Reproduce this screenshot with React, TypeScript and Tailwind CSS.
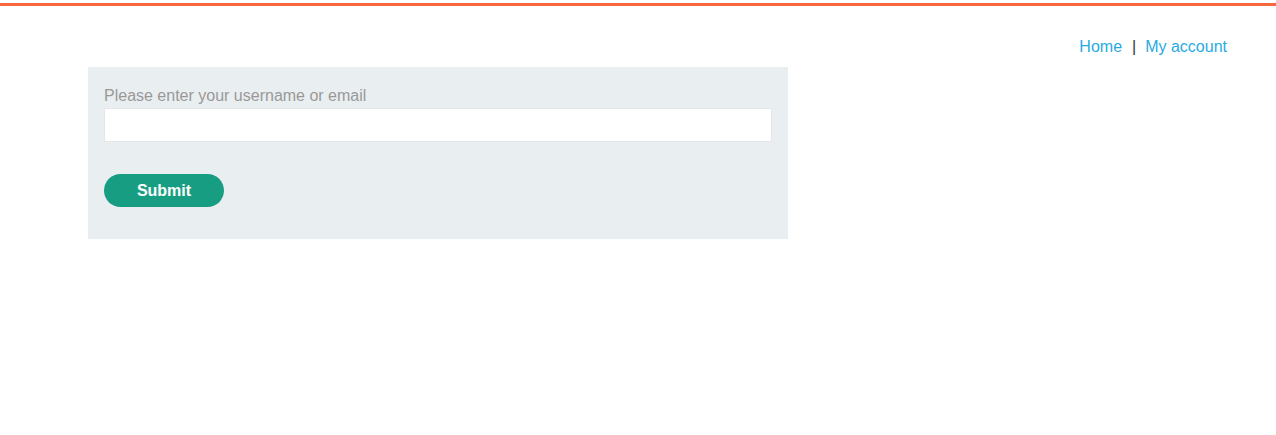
import React from 'react';

function App() {
  return (
    <div className="min-h-[435px] bg-white font-['Liberation_Sans',Arial,sans-serif]">
      <div className="pt-[3px]">
        <div className="h-[3px] bg-[#f9663f]" />
      </div>

      <header className="flex justify-end pr-[49px] pt-[32px] text-[16px] leading-[18px]">
        <a href="#" className="text-[#29abe2]">Home</a>
        <span className="ml-[10px] mr-[9px] text-[#333332]">|</span>
        <a href="#" className="text-[#29abe2]">My account</a>
      </header>

      <form className="ml-[88px] mt-[11px] w-[700px] bg-[#e9eef0] px-4 pt-4 pb-8">
        <label className="block text-[16px] leading-[25px] text-[#999999]">
          Please enter your username or email
        </label>
        <input
          type="text"
          className="block h-[34px] w-full border border-[#e6e6e6] bg-white px-2 outline-none"
        />
        <button
          type="button"
          className="mt-8 h-[33px] w-[120px] rounded-full bg-[#179e82] text-[16px] font-bold text-white"
        >
          Submit
        </button>
      </form>
    </div>
  );
}

export default App;
